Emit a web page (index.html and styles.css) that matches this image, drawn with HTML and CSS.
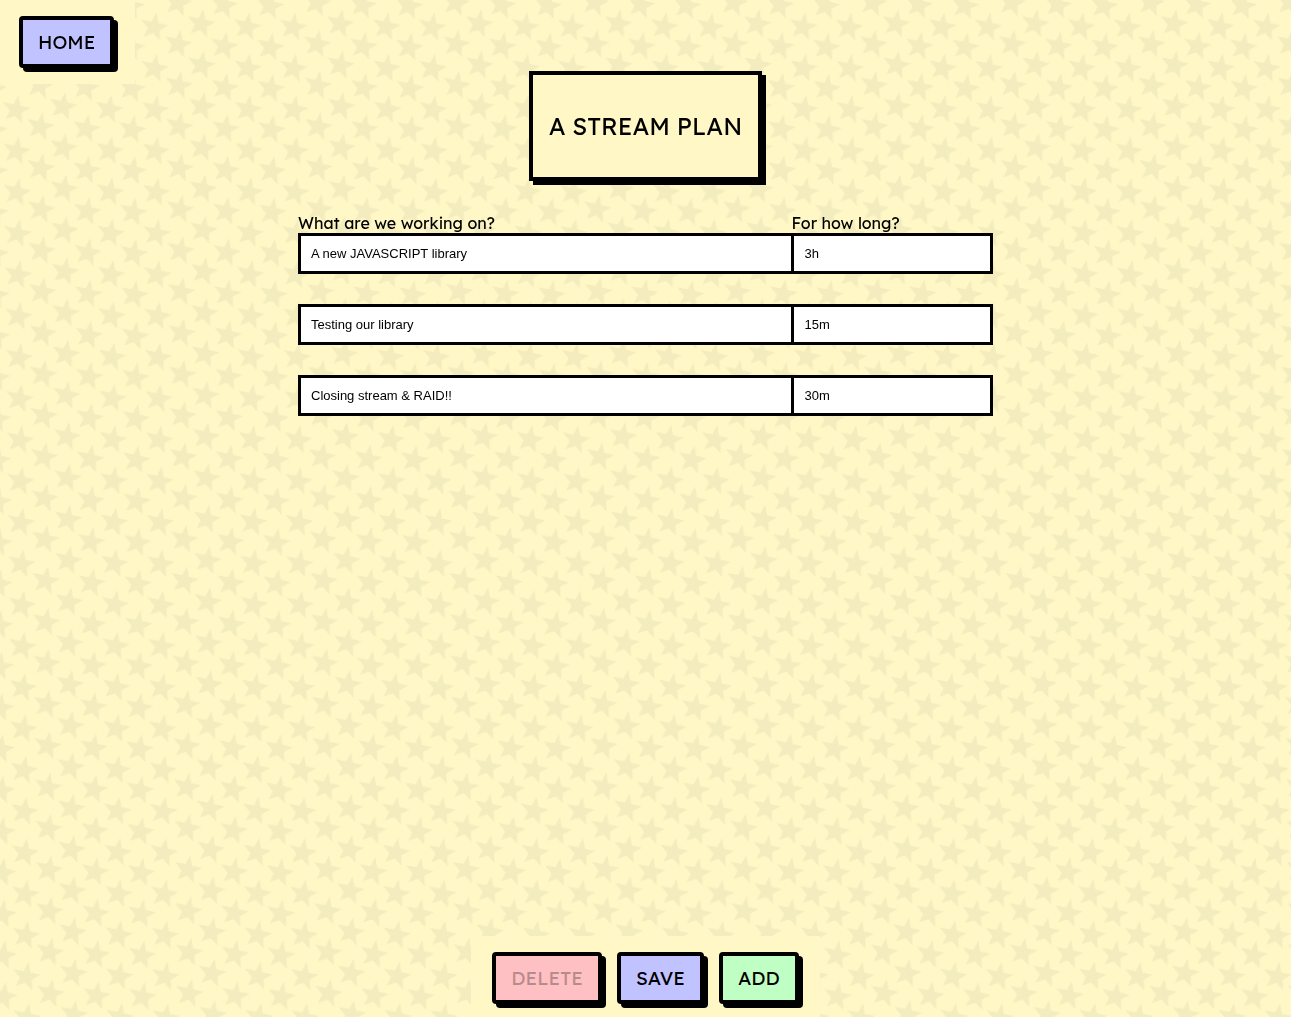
FILE: index.html
```html
<!DOCTYPE html>
<html lang="en">
<head>
<meta charset="utf-8">
<title>A stream plan</title>
<link rel="stylesheet" href="styles.css">
</head>
<body>
<svg class="backdrop" aria-hidden="true">
  <defs>
    <path id="star" d="M2.3 -14 L4 -3.5 L14.2 -1.2 L5.3 3.6 L5.5 14 L-1.3 6.7 L-10.8 10 L-6.5 1.5 L-13.2 -7 L-2.6 -5 Z"/>
    <pattern id="stars" width="139" height="41.28" patternUnits="userSpaceOnUse" patternTransform="translate(38 2) skewX(0.67)">
      <g class="backdrop-stars">
        <use href="#star" x="24" y="21.3"/>
        <use href="#star" x="70" y="24.2"/>
        <use href="#star" x="116" y="24.6"/><use href="#star" x="116" y="-16.68"/>
        <use href="#star" x="1" y="0.2"/><use href="#star" x="1" y="41.48"/>
        <use href="#star" x="140" y="0.2"/><use href="#star" x="140" y="41.48"/>
        <use href="#star" x="47" y="2.4"/><use href="#star" x="47" y="43.68"/>
        <use href="#star" x="93" y="3.3"/><use href="#star" x="93" y="44.58"/>
      </g>
    </pattern>
  </defs>
  <rect width="100%" height="100%" fill="url(#stars)"/>
</svg>
<div class="page">
  <nav class="nav"><button class="btn btn-blue" type="button">HOME</button></nav>
  <main class="plan">
    <h1 class="title">A STREAM PLAN</h1>
    <form class="rows">
      <div class="row">
        <div class="field"><label for="t1">What are we working on?</label><input id="t1" type="text" value="A new JAVASCRIPT library"></div>
        <div class="field"><label for="d1">For how long?</label><input id="d1" type="text" value="3h"></div>
      </div>
      <div class="row">
        <div class="field"><input type="text" aria-label="What are we working on?" value="Testing our library"></div>
        <div class="field"><input type="text" aria-label="For how long?" value="15m"></div>
      </div>
      <div class="row">
        <div class="field"><input type="text" aria-label="What are we working on?" value="Closing stream &amp; RAID!!"></div>
        <div class="field"><input type="text" aria-label="For how long?" value="30m"></div>
      </div>
    </form>
  </main>
  <footer class="actions">
    <button class="btn btn-red" type="button" disabled>DELETE</button>
    <button class="btn btn-blue" type="button">SAVE</button>
    <button class="btn btn-green" type="button">ADD</button>
  </footer>
</div>
</body>
</html>
```
FILE: styles.css
```css
* { box-sizing: border-box; }

body {
  margin: 0;
  background: #fff7c5;
  color: #000;
  font-family: Lexend, Lato, sans-serif;
  font-size: 16px;
}

.backdrop {
  position: fixed;
  inset: 0;
  width: 100%;
  height: 100%;
  z-index: -1;
}

.backdrop-stars { fill: #f3ecbe; }

.page {
  min-height: 100vh;
  display: flex;
  flex-direction: column;
  align-items: center;
}

.nav,
.actions {
  display: flex;
  gap: 15px;
  background: #fff7c5;
}

.nav {
  align-self: flex-start;
  margin-bottom: -13px;
  padding: 16px 21px 16px 19px;
}

.actions {
  margin-top: auto;
  padding: 16px 21px 13px;
}

.btn {
  height: 52px;
  padding: 0 15px;
  border: 4px solid #000;
  border-radius: 4px;
  box-shadow: 4px 4px 0 #000;
  color: #000;
  font-family: inherit;
  font-size: 19px;
  font-weight: 400;
}

.btn-blue { background: #c0c3ff; }
.btn-red { background: #ffc0c3; }
.btn-green { background: #c0ffc3; }
.btn:disabled { color: #b78b8c; }

.plan {
  width: 100%;
  max-width: 695px;
  display: flex;
  flex-direction: column;
  align-items: center;
}

.title {
  margin: 0 0 32px;
  padding: 34px 16px;
  border: 4px solid #000;
  box-shadow: 4px 4px 0 #000;
  background: #fff7c5;
  font-size: 24px;
  line-height: 34px;
  font-weight: 400;
}

.rows {
  width: 100%;
  display: grid;
  gap: 30px;
}

.row {
  display: grid;
  grid-template-columns: 5fr 2fr;
}

.field {
  display: flex;
  flex-direction: column;
}

.field + .field { margin-left: -3px; }

.field label { line-height: 20px; }

.field input {
  width: 100%;
  height: 41px;
  padding: 0 10px;
  border: 3px solid #000;
  border-radius: 0;
  background: #fff;
  color: #000;
  font: 13px "Liberation Sans", Arial, sans-serif;
}
```
